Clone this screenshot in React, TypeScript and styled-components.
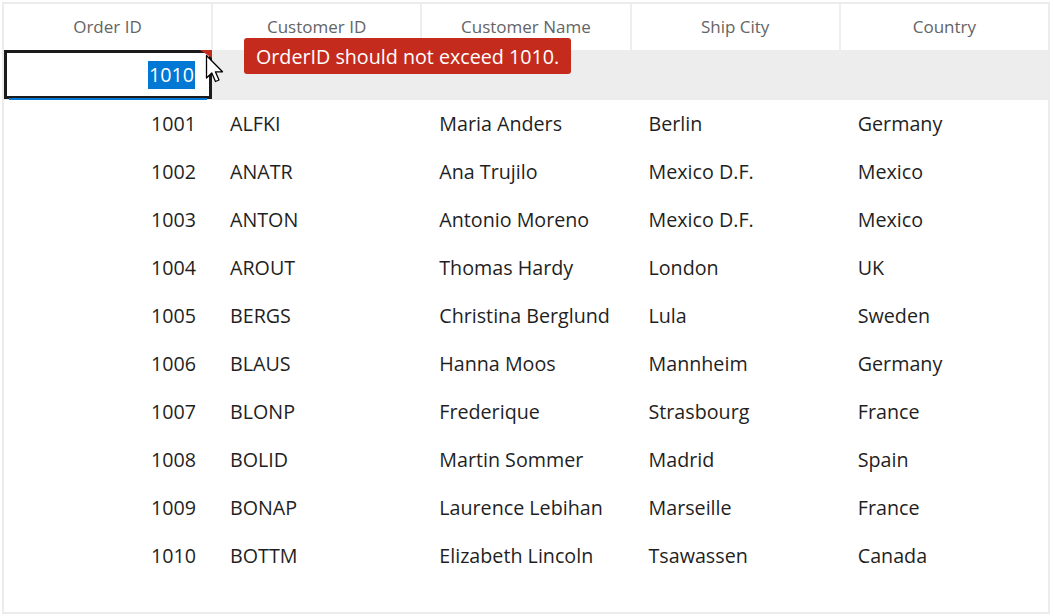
import styled, { createGlobalStyle } from 'styled-components';

const rows = [
  [1001, 'ALFKI', 'Maria Anders', 'Berlin', 'Germany'],
  [1002, 'ANATR', 'Ana Trujilo', 'Mexico D.F.', 'Mexico'],
  [1003, 'ANTON', 'Antonio Moreno', 'Mexico D.F.', 'Mexico'],
  [1004, 'AROUT', 'Thomas Hardy', 'London', 'UK'],
  [1005, 'BERGS', 'Christina Berglund', 'Lula', 'Sweden'],
  [1006, 'BLAUS', 'Hanna Moos', 'Mannheim', 'Germany'],
  [1007, 'BLONP', 'Frederique', 'Strasbourg', 'France'],
  [1008, 'BOLID', 'Martin Sommer', 'Madrid', 'Spain'],
  [1009, 'BONAP', 'Laurence Lebihan', 'Marseille', 'France'],
  [1010, 'BOTTM', 'Elizabeth Lincoln', 'Tsawassen', 'Canada'],
];

const headers = ['Order ID', 'Customer ID', 'Customer Name', 'Ship City', 'Country'];

const App = () => {
  return (
    <>
      <GlobalStyle />
      <Grid>
        <HeaderRow>
          {headers.map((h, idx) => (
            <HeaderCell key={h} first={idx === 0}>
              {h}
            </HeaderCell>
          ))}
        </HeaderRow>
        <EditRow>
          <EditCell>
            <Selected>1010</Selected>
            <ErrorMark />
          </EditCell>
          <Tooltip>OrderID should not exceed 1010.</Tooltip>
          <Cursor width="22" height="32" viewBox="0 0 22 32">
            <path
              d="M1.5 1.5 L1.5 24 L6.8 19 L10.5 27.5 L14 26 L10.4 17.8 L17.5 17.8 Z"
              fill="#fff"
              stroke="#000"
              strokeWidth="1.3"
              strokeLinejoin="round"
            />
          </Cursor>
        </EditRow>
        {rows.map((r) => (
          <Row key={r[0]}>
            {r.map((v, idx) => (
              <Cell key={idx} right={idx === 0}>
                {v}
              </Cell>
            ))}
          </Row>
        ))}
      </Grid>
    </>
  );
};

export default App;

const GlobalStyle = createGlobalStyle`
  body {
    margin: 0;
    background: #fff;
    font-family: "Open Sans", "Noto Sans", sans-serif;
  }
`;

const Grid = styled.div`
  width: 1044px;
  height: 608px;
  margin: 2px;
  border: 2px solid #ececec;
  box-sizing: content-box;
  overflow: hidden;
`;

const HeaderRow = styled.div`
  display: grid;
  grid-template-columns: 207px repeat(4, 1fr);
  height: 46px;
`;

const HeaderCell = styled.div<{ first?: boolean }>`
  display: flex;
  align-items: center;
  justify-content: center;
  padding-bottom: 2px;
  border-left: ${(p) => (p.first ? 'none' : '2px solid #eeeeee')};
  color: #646464;
  font-size: 17px;
`;

const EditRow = styled.div`
  position: relative;
  height: 50px;
  background: #ededed;
`;

const EditCell = styled.div`
  position: relative;
  width: 208px;
  height: 49px;
  box-sizing: border-box;
  background: #fff;
  border: 3px solid #1b1b1b;
  display: flex;
  align-items: center;
  justify-content: flex-end;
  padding-right: 14px;

  &::after {
    content: '';
    position: absolute;
    left: 2px;
    right: 2px;
    bottom: -4px;
    height: 2px;
    background: #0078d4;
  }
`;

const Selected = styled.span`
  background: #0078d4;
  color: #fff;
  font-size: 19.7px;
  line-height: 28px;
  padding: 0 1px;
`;

const ErrorMark = styled.div`
  position: absolute;
  top: -3px;
  right: -3px;
  width: 0;
  height: 0;
  border-top: 8px solid #c42b1c;
  border-left: 12px solid transparent;
`;

const Tooltip = styled.div`
  position: absolute;
  left: 240px;
  top: -12px;
  height: 36px;
  padding: 0 12px;
  display: flex;
  align-items: center;
  background: #c42b1c;
  color: #fff;
  border-radius: 3px;
  font-size: 19.7px;
  white-space: nowrap;
`;

const Cursor = styled.svg`
  position: absolute;
  left: 201px;
  top: 4px;
`;

const Row = styled.div`
  display: grid;
  grid-template-columns: 207px repeat(4, 1fr);
  height: 48px;
`;

const Cell = styled.div<{ right?: boolean }>`
  display: flex;
  align-items: center;
  justify-content: ${(p) => (p.right ? 'flex-end' : 'flex-start')};
  padding: ${(p) => (p.right ? '0 15px 2px 0' : '0 0 2px 19px')};
  color: #1f1f1f;
  font-size: 19.7px;
`;
